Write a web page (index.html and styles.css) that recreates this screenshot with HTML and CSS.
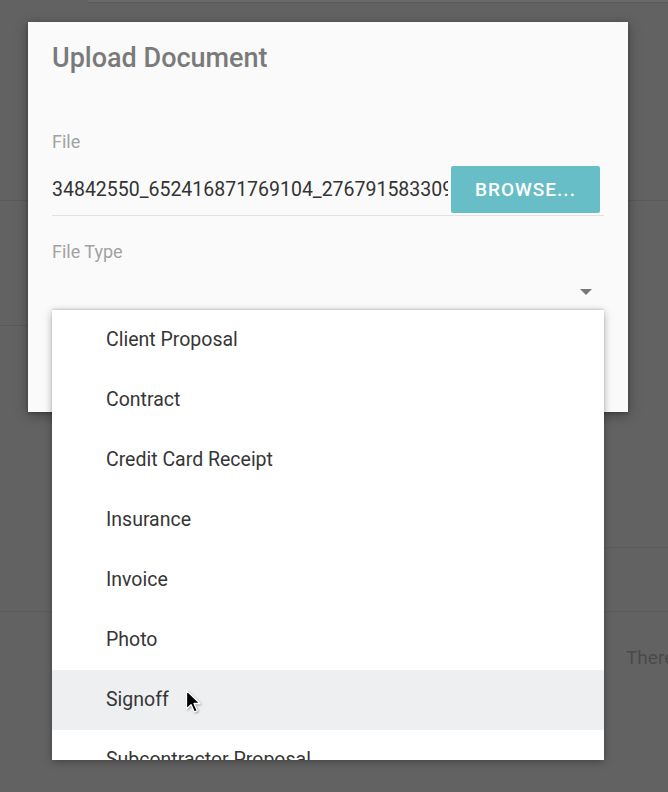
FILE: index.html
```html
<!DOCTYPE html>
<html>
<head>
	<meta charset="utf-8">
	<title>Upload Document</title>
	<link rel="stylesheet" href="styles.css">
</head>
<body>
	<!-- page behind the overlay -->
	<div class="page">
		<div class="page-top"></div>
		<div class="page-body">
			<div class="col col-left">
				<div class="row row-a"></div>
				<div class="row row-b"></div>
				<div class="row row-c"></div>
			</div>
			<div class="col col-mid"></div>
			<div class="col col-right">
				<div class="row row-a"></div>
				<div class="row row-d"></div>
				<div class="row row-e"></div>
				<div class="row row-f">There</div>
			</div>
		</div>
	</div>

	<div class="dialog">
		<h2 class="dialog-title">Upload Document</h2>
		<div class="field field-file">
			<label class="field-label">File</label>
			<div class="file-row">
				<div class="file-name">34842550_652416871769104_2767915833099567104_n.jpg</div>
				<a href="javascript:;" class="btn-browse">BROWSE...</a>
			</div>
		</div>
		<div class="field field-type">
			<label class="field-label">File Type</label>
			<div class="select-row">
				<span class="select-arrow"></span>
			</div>
		</div>
	</div>

	<!-- open menu of the select -->
	<ul class="menu">
		<li>Client Proposal</li>
		<li>Contract</li>
		<li>Credit Card Receipt</li>
		<li>Insurance</li>
		<li>Invoice</li>
		<li>Photo</li>
		<li class="hover">Signoff</li>
		<li>Subcontractor Proposal</li>
		<li>Other</li>
	</ul>

	<svg class="cursor" width="18" height="26" viewBox="0 0 18 26">
		<path d="M1.5 1.5 L1.5 20 L6 15.6 L9.3 23 L12.3 21.7 L9 14.5 L15 14.5 Z" fill="#000" stroke="#fff" stroke-width="1.3" stroke-linejoin="round"/>
	</svg>
</body>
</html>
```

FILE: styles.css
```css
	*{margin: 0;padding: 0;box-sizing: border-box;text-decoration: none;list-style: none;}
	html,body{height: 100%;}
	body{
		background: #626262;
		font-family: Roboto, "Liberation Sans", sans-serif;
		overflow: hidden;
		position: relative;
	}

	/* background page */
	.page{
		height: 792px;
		display: flex;
		flex-direction: column;
	}
	.page-top{
		height: 3px;
		margin-left: 88px;
		background: #6a6a6a;
		border-bottom: 1px solid #5b5b5b;
	}
	.page-body{
		flex: 1;
		display: flex;
	}
	.col-left{width: 52px;}
	.col-mid{flex: 1;}
	.col-right{width: 64px;}
	.row{border-bottom: 1px solid #5a5a5a;}
	.row-a{height: 198px;}
	.col-left .row-b{height: 125px;}
	.col-left .row-c{height: 286px;}
	.col-right .row-d{height: 347px;}
	.col-right .row-e{height: 64px;}
	.col-right .row-f{
		border-bottom: none;
		padding: 34px 0 0 22px;
		font-size: 19px;
		line-height: 24px;
		color: #4a4a4a;
		white-space: nowrap;
	}

	/* dialog */
	.dialog{
		position: absolute;
		top: 22px;
		left: 28px;
		width: 600px;
		height: 390px;
		background: #fafafa;
		padding: 20px 24px 0;
		box-shadow: 0 3px 12px rgba(0,0,0,.35), 0 1px 3px rgba(0,0,0,.2);
	}
	.dialog-title{
		font-size: 27px;
		line-height: 32px;
		font-weight: 500;
		color: #7a7a7a;
	}
	.field-label{
		display: block;
		font-size: 18px;
		line-height: 24px;
		color: #a2a2a2;
	}
	.field-file{margin-top: 56px;}
	.file-row{
		margin-top: 12px;
		display: flex;
		align-items: center;
		padding: 0 4px 2px 0;
		border-bottom: 1px solid #e2e2e2;
	}
	.file-name{
		flex: 1;
		min-width: 0;
		overflow: hidden;
		white-space: nowrap;
		font-size: 19.5px;
		color: #333;
		margin-right: 3px;
	}
	.btn-browse{
		width: 149px;
		height: 47px;
		line-height: 47px;
		text-align: center;
		background: #67bec6;
		border-radius: 2px;
		color: #fff;
		font-size: 19px;
		font-weight: 500;
		letter-spacing: 1px;
	}
	.field-type{margin-top: 24px;}
	.select-row{
		height: 56px;
		display: flex;
		justify-content: flex-end;
		align-items: center;
		padding-right: 12px;
	}
	.select-arrow{
		width: 0;
		height: 0;
		border-left: 6px solid transparent;
		border-right: 6px solid transparent;
		border-top: 6px solid #777;
	}

	/* menu */
	.menu{
		position: absolute;
		top: 310px;
		left: 52px;
		width: 552px;
		height: 450px;
		overflow: hidden;
		background: #fff;
		box-shadow: 0 2px 8px rgba(0,0,0,.3), 0 -1px 2px rgba(0,0,0,.12);
	}
	.menu li{
		height: 60px;
		line-height: 60px;
		padding-left: 54px;
		font-size: 19.5px;
		color: #363636;
		white-space: nowrap;
	}
	.menu .hover{
		background: #eeeff1;
	}
	.cursor{
		position: absolute;
		top: 689px;
		left: 185px;
		filter: drop-shadow(1px 1px 1px rgba(0,0,0,.3));
	}
```
